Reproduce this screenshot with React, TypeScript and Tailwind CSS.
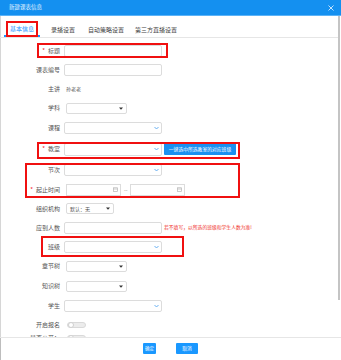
import React from "react";

function Label({ text, star }: { text: string; star?: boolean }) {
  return (
    <div className="w-[60px] shrink-0 text-right text-[6px] leading-none text-[#555]">
      {star && <span className="mr-[3px] text-[#f5222d]">*</span>}
      {text}
    </div>
  );
}

function Chevron() {
  return (
    <svg width="5" height="4" viewBox="0 0 5 4" className="shrink-0">
      <path d="M0.5 1 L2.5 3 L4.5 1" fill="none" stroke="#5aa8f0" strokeWidth="0.9" />
    </svg>
  );
}

function Caret() {
  return (
    <svg width="4" height="3" viewBox="0 0 4 3" className="shrink-0">
      <polygon points="0,0.5 4,0.5 2,2.8" fill="#333" />
    </svg>
  );
}

function Calendar() {
  return (
    <svg width="5" height="5" viewBox="0 0 5 5" className="shrink-0">
      <rect x="0.5" y="0.8" width="4" height="3.8" fill="none" stroke="#b5b5b5" strokeWidth="0.7" />
      <line x1="0.5" y1="2" x2="4.5" y2="2" stroke="#b5b5b5" strokeWidth="0.7" />
    </svg>
  );
}

function Input() {
  return <div className="ml-[4px] h-[12px] w-[98px] rounded-[2px] border border-[#dcdcdc] bg-white" />;
}

function ChevronSelect({ h = "h-[12px]" }: { h?: string }) {
  return (
    <div className={`ml-[4px] flex w-[98px] items-center justify-end rounded-[2px] border border-[#dcdcdc] bg-white pr-[2px] ${h}`}>
      <Chevron />
    </div>
  );
}

function SmallSelect() {
  return (
    <div className="ml-[6px] flex h-[11px] w-[61px] items-center justify-end rounded-[2px] border border-[#dcdcdc] bg-white pr-[3px]">
      <Caret />
    </div>
  );
}

function DateBox() {
  return (
    <div className="flex h-[12px] w-[55px] items-center justify-end border border-[#dcdcdc] bg-white pr-[2px]">
      <Calendar />
    </div>
  );
}

function Toggle() {
  return (
    <div className="ml-[7px] flex h-[6px] w-[19px] items-center rounded-full border border-[#d9d9d9] bg-[#ececec]">
      <div className="h-[6px] w-[6px] rounded-full border border-[#d0d0d0] bg-white" />
    </div>
  );
}

const tabs = [
  { label: "基本信息", w: "w-[36px]" },
  { label: "录播设置", w: "w-[46px]" },
  { label: "自动策略设置", w: "w-[40px]" },
  { label: "第三方直播设置", w: "w-[60px]" },
];

export default function App() {
  return (
    <div className="flex h-[360px] w-[341px] flex-col overflow-hidden bg-white font-['Noto_Sans_CJK_SC','Liberation_Sans',sans-serif]">
      {/* Header */}
      <div className="flex h-[16px] shrink-0 items-center justify-between border-b border-[#5cb3f7] bg-[#1490f0] pl-[9px] pr-[7px]">
        <span className="text-[5.5px] leading-none text-white/90">新建课表信息</span>
        <svg width="6" height="6" viewBox="0 0 6 6">
          <path d="M0.5 0.5 L5.5 5.5 M5.5 0.5 L0.5 5.5" stroke="#d6ecff" strokeWidth="0.9" />
        </svg>
      </div>

      <div className="flex h-[321px] shrink-0 shadow-[inset_1px_0_0_#d6d6d6]">
        <div className="flex min-w-0 flex-1 flex-col">
          {/* Tabs */}
          <div className="flex h-[22px] shrink-0 items-end border-b border-[#e6e6e6] pl-[4px] pr-[4px]">
            {tabs.map((t, i) => (
              <div
                key={t.label}
                className={`relative flex h-[15px] items-center justify-center whitespace-nowrap text-[6px] leading-none ${t.w} ${
                  i === 0 ? "border-b-2 border-[#1890ff] text-[#1890ff]" : "text-[#444]"
                }`}
              >
                {t.label}
                {i === 0 && <div className="absolute left-[2px] top-[-1px] h-[16px] w-[32px] border-2 border-[#f01010]" />}
              </div>
            ))}
          </div>

          {/* Body */}
          <div className="flex min-h-0 flex-1 flex-col overflow-hidden pt-[3px]">
            <div className="relative flex h-[19px] shrink-0 items-center">
              <Label text="标题" star />
              <Input />
              <div className="absolute left-[37px] top-[2px] h-[15px] w-[131px] border-2 border-[#f01010]" />
            </div>
            <div className="flex h-[19px] shrink-0 items-center">
              <Label text="课表编号" />
              <Input />
            </div>
            <div className="flex h-[19px] shrink-0 items-center">
              <Label text="主讲" />
              <span className="ml-[6px] text-[5px] leading-none text-[#555]">孙老老</span>
            </div>
            <div className="flex h-[20px] shrink-0 items-center">
              <Label text="学科" />
              <SmallSelect />
            </div>
            <div className="flex h-[20px] shrink-0 items-center">
              <Label text="课程" />
              <ChevronSelect />
            </div>
            <div className="relative flex h-[22px] shrink-0 items-center">
              <Label text="教室" star />
              <ChevronSelect h="h-[13px]" />
              <div className="ml-[2px] flex h-[12px] w-[72px] items-center justify-center rounded-[1px] bg-[#1a90f0] text-[4.8px] leading-none text-white whitespace-nowrap">
                一键选中所选教室的对应班级
              </div>
              <div className="absolute left-[37px] top-[4px] h-[17px] w-[203px] border-2 border-[#f01010]" />
            </div>
            <div className="relative shrink-0">
              <div className="flex h-[20px] items-center">
                <Label text="节次" />
                <ChevronSelect />
              </div>
              <div className="flex h-[19px] items-center">
                <Label text="起止时间" star />
                <div className="ml-[6px] flex items-center">
                  <DateBox />
                  <span className="mx-[3px] text-[5px] leading-none text-[#777]">--</span>
                  <DateBox />
                </div>
              </div>
              <div className="absolute left-[25px] top-[3px] h-[35px] w-[215px] border-2 border-[#f01010]" />
            </div>
            <div className="flex h-[19px] shrink-0 items-center">
              <Label text="组织机构" />
              <div className="ml-[6px] flex h-[11px] w-[48px] items-center justify-between rounded-[2px] border border-[#dcdcdc] bg-white pl-[3px] pr-[3px]">
                <span className="text-[5px] leading-none text-[#555]">默认：无</span>
                <Caret />
              </div>
            </div>
            <div className="flex h-[19px] shrink-0 items-center">
              <Label text="应到人数" />
              <Input />
              <span className="ml-[2px] whitespace-nowrap text-[4.8px] leading-none text-[#f0302a]">
                若不填写，以所选的班级和学生人数为准!
              </span>
            </div>
            <div className="relative flex h-[19px] shrink-0 items-center">
              <Label text="班级" />
              <ChevronSelect />
              <div className="absolute left-[41px] top-[-1px] h-[21px] w-[143px] border-2 border-[#f01010]" />
            </div>
            <div className="flex h-[20px] shrink-0 items-center">
              <Label text="章节树" />
              <SmallSelect />
            </div>
            <div className="flex h-[20px] shrink-0 items-center">
              <Label text="知识树" />
              <SmallSelect />
            </div>
            <div className="flex h-[19px] shrink-0 items-center">
              <Label text="学生" />
              <ChevronSelect />
            </div>
            <div className="flex h-[19px] shrink-0 items-center">
              <Label text="开启报名" />
              <Toggle />
            </div>
            <div className="flex h-[8px] shrink-0 items-center">
              <Label text="是否公开：" />
              <Toggle />
            </div>
          </div>
        </div>

        {/* Scrollbar */}
        <div className="w-[3px] shrink-0">
          <div className="h-[284px] w-[2px] bg-[#c4c4c4]" />
        </div>
      </div>

      {/* Footer */}
      <div className="flex flex-1 items-center justify-center gap-[20px] border-t border-[#e6e6e6] pb-[1px] shadow-[inset_1px_0_0_#bdbdbd]">
        <div className="flex h-[11px] w-[13px] items-center justify-center rounded-[1px] bg-[#1a98ff] text-[4.5px] leading-none text-white">
          确定
        </div>
        <div className="flex h-[11px] w-[22px] items-center justify-center rounded-[1px] bg-[#1a98ff] text-[4.8px] leading-none text-white">
          取消
        </div>
      </div>
    </div>
  );
}
